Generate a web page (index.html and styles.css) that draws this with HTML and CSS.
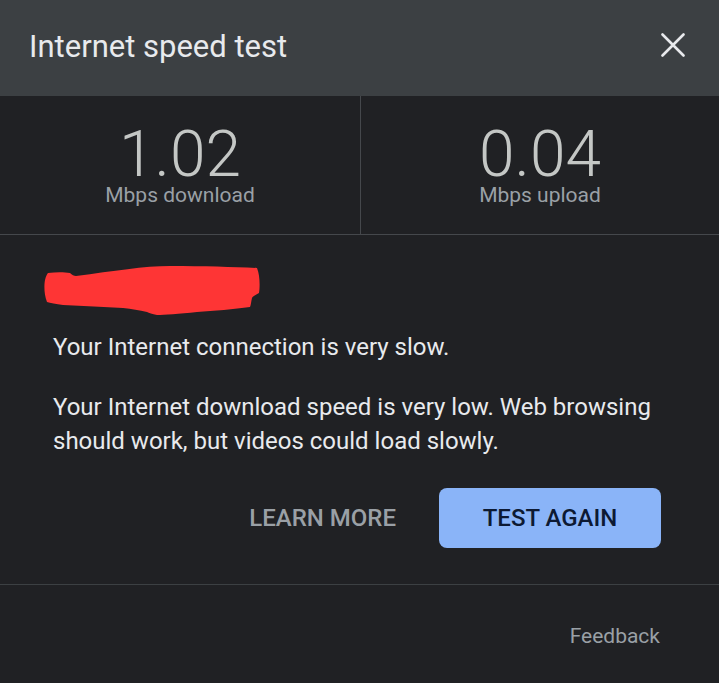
FILE: index.html
```html
<!DOCTYPE html>
<html lang="en">
<head>
    <meta charset="UTF-8">
    <meta name="viewport" content="width=device-width, initial-scale=1.0">
    <title>Internet speed test</title>
    <link rel="stylesheet" href="styles.css">
</head>
<body>
    <div class="dialog">
        <div class="dialog-header">
            <h2>Internet speed test</h2>
            <button class="close-btn" aria-label="Close">
                <svg width="24" height="24" viewBox="0 0 24 24">
                    <path d="M1.5 1.5 L22.5 22.5 M22.5 1.5 L1.5 22.5" stroke="#e8eaed" stroke-width="2.6" stroke-linecap="round"/>
                </svg>
            </button>
        </div>

        <div class="stats">
            <div class="stat">
                <div class="stat-value">1.02</div>
                <div class="stat-label">Mbps download</div>
            </div>
            <div class="stat">
                <div class="stat-value">0.04</div>
                <div class="stat-label">Mbps upload</div>
            </div>
        </div>

        <div class="result">
            <!-- redacted -->
            <svg class="redact" width="218" height="52" viewBox="0 0 218 52">
                <path d="M4 8 C12 7 20 7 26 8 C28 10 30 11 32 11 C70 6 100 1 126 1 C160 1 190 2 213 3 C216 10 216 22 215 28 C212 30 209 31 208 33 C207 37 207 40 206 42 C190 44 170 46 153 47 C135 49 120 50 113 50 C108 49 105 48 103 47 C95 45 88 44 79 43 C60 42 40 41 19 40 C12 39 6 38 3 37 C0 30 0 20 1 15 C2 11 3 9 4 8 Z" fill="#fe3535"/>
            </svg>
            <p class="headline">Your Internet connection is very slow.</p>
            <p class="detail">Your Internet download speed is very low. Web browsing should work, but videos could load slowly.</p>
            <div class="actions">
                <button class="btn-text">LEARN MORE</button>
                <button class="btn-primary">TEST AGAIN</button>
            </div>
        </div>

        <div class="dialog-footer">
            <a href="#" class="feedback">Feedback</a>
        </div>
    </div>
</body>
</html>
```

FILE: styles.css
```css
body {
    margin: 0;
    padding: 0;
    background: #202124;
    font-family: Roboto, "Liberation Sans", Arial, sans-serif;
    color: #e8eaed;
    overflow: hidden;
}

.dialog {
    width: 719px;
    height: 683px;
    background: #202124;
}

.dialog-header {
    height: 96px;
    background: #3c4043;
    display: flex;
    align-items: center;
    justify-content: space-between;
    padding: 0 34px 0 29px;
    box-sizing: border-box;
}

.dialog-header h2 {
    margin: 0;
    font-size: 31px;
    font-weight: 400;
    color: #e8eaed;
    position: relative;
    top: -2px;
}

.close-btn {
    background: none;
    border: none;
    padding: 0;
    display: flex;
    cursor: pointer;
    position: relative;
    top: -3px;
}

.stats {
    display: flex;
    border-bottom: 1px solid #45484c;
    height: 138px;
}

.stat {
    flex: 1;
    display: flex;
    flex-direction: column;
    align-items: center;
    padding-top: 25px;
}

.stat + .stat {
    border-left: 1px solid #45484c;
}

.stat:first-child {
    flex: 0 0 360px;
}

.stat-value {
    font-size: 64px;
    font-weight: 300;
    line-height: 68px;
    color: #c4c7c5;
}

.stat-label {
    font-size: 21px;
    color: #9aa0a6;
    line-height: 24px;
    margin-top: -6px;
}

.result {
    padding: 30px 53px 36px 53px;
    border-bottom: 1px solid #3c4043;
}

.redact {
    display: block;
    margin-left: -9px;
}

.result p {
    margin: 0;
    font-size: 24px;
    line-height: 34px;
    color: #e8eaed;
}

.result .headline {
    margin-top: 13px;
}

.result .detail {
    margin-top: 26px;
}

.actions {
    display: flex;
    justify-content: flex-end;
    align-items: center;
    gap: 43px;
    margin-top: 30px;
    margin-right: 5px;
}

.btn-text {
    background: none;
    border: none;
    font-family: inherit;
    font-size: 24px;
    font-weight: 500;
    color: #9aa0a6;
    padding: 0;
    cursor: pointer;
}

.btn-primary {
    background: #8ab4f8;
    border: none;
    border-radius: 8px;
    width: 222px;
    height: 60px;
    font-family: inherit;
    font-size: 24px;
    font-weight: 500;
    color: #0d1a33;
    cursor: pointer;
}

.dialog-footer {
    display: flex;
    justify-content: flex-end;
    padding: 39px 59px 0 0;
}

.feedback {
    font-size: 21px;
    color: #9aa0a6;
    text-decoration: none;
}
```
